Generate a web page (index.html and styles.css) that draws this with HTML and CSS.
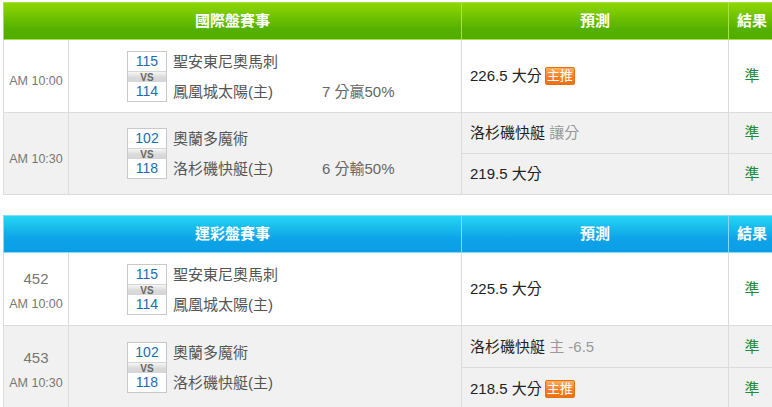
FILE: index.html
```html
<!DOCTYPE html>
<html lang="zh-Hant">
<head>
<meta charset="utf-8">
<link rel="stylesheet" href="styles.css">
</head>
<body>
<div class="page">
  <table class="board board-green">
    <colgroup><col class="c-time"><col class="c-match"><col class="c-pred"><col class="c-res"></colgroup>
    <thead>
      <tr><th colspan="2">國際盤賽事</th><th>預測</th><th>結果</th></tr>
    </thead>
    <tbody>
      <tr class="row-single">
        <td class="time time-only"><div class="clock">AM 10:00</div></td>
        <td class="match">
          <div class="match-inner">
            <div class="score-box"><div class="num">115</div><div class="vs">VS</div><div class="num">114</div></div>
            <div class="teams"><div class="team">聖安東尼奧馬刺</div><div class="team">鳳凰城太陽(主)</div></div>
            <div class="spread">7 分贏50%</div>
          </div>
        </td>
        <td class="pred">226.5 大分<span class="badge">主推</span></td>
        <td class="res">準</td>
      </tr>
      <tr class="row-alt row-sub">
        <td class="time time-only" rowspan="2"><div class="clock">AM 10:30</div></td>
        <td class="match" rowspan="2">
          <div class="match-inner">
            <div class="score-box"><div class="num">102</div><div class="vs">VS</div><div class="num">118</div></div>
            <div class="teams"><div class="team">奧蘭多魔術</div><div class="team">洛杉磯快艇(主)</div></div>
            <div class="spread">6 分輸50%</div>
          </div>
        </td>
        <td class="pred">洛杉磯快艇 <span class="muted">讓分</span></td>
        <td class="res">準</td>
      </tr>
      <tr class="row-alt row-sub">
        <td class="pred">219.5 大分</td>
        <td class="res">準</td>
      </tr>
    </tbody>
  </table>

  <table class="board board-blue">
    <colgroup><col class="c-time"><col class="c-match"><col class="c-pred"><col class="c-res"></colgroup>
    <thead>
      <tr><th colspan="2">運彩盤賽事</th><th>預測</th><th>結果</th></tr>
    </thead>
    <tbody>
      <tr class="row-single">
        <td class="time time-num"><div class="game-no">452</div><div class="clock">AM 10:00</div></td>
        <td class="match">
          <div class="match-inner">
            <div class="score-box"><div class="num">115</div><div class="vs">VS</div><div class="num">114</div></div>
            <div class="teams"><div class="team">聖安東尼奧馬刺</div><div class="team">鳳凰城太陽(主)</div></div>
          </div>
        </td>
        <td class="pred">225.5 大分</td>
        <td class="res">準</td>
      </tr>
      <tr class="row-alt row-sub2">
        <td class="time time-num" rowspan="2"><div class="game-no">453</div><div class="clock">AM 10:30</div></td>
        <td class="match" rowspan="2">
          <div class="match-inner">
            <div class="score-box"><div class="num">102</div><div class="vs">VS</div><div class="num">118</div></div>
            <div class="teams"><div class="team">奧蘭多魔術</div><div class="team">洛杉磯快艇(主)</div></div>
          </div>
        </td>
        <td class="pred">洛杉磯快艇 <span class="muted">主 -6.5</span></td>
        <td class="res">準</td>
      </tr>
      <tr class="row-alt row-sub2">
        <td class="pred">218.5 大分<span class="badge">主推</span></td>
        <td class="res">準</td>
      </tr>
    </tbody>
  </table>
</div>
</body>
</html>
```

FILE: styles.css
```css
html, body {
  margin: 0;
  padding: 0;
  background: #ffffff;
}

body {
  font-family: "Liberation Sans", "Noto Sans CJK TC", sans-serif;
  color: #333;
}

.page {
  padding: 2px 0 0 3px;
  display: flex;
  flex-direction: column;
  gap: 20px;
}

.board {
  border-collapse: collapse;
  table-layout: fixed;
  width: 772px;
}

.c-time { width: 65px; }
.c-match { width: 393px; }
.c-pred { width: 267px; }
.c-res { width: 47px; }

.board th {
  height: 36px;
  padding: 0;
  color: #fff;
  font-size: 15px;
  font-weight: bold;
  text-align: center;
  line-height: 36px;
}

.board-green thead tr {
  background: linear-gradient(#8fd600, #55b100 70%, #4fad00);
}
.board-green th {
  border: 1px solid #a8e24a;
}

.board-blue thead tr {
  background: linear-gradient(#25d6f2, #0ea4e8 60%, #0a9de6);
}
.board-blue th {
  border: 1px solid #8ad9f2;
}

.board td {
  border: 1px solid #dcdcdc;
  padding: 0;
  font-size: 15px;
  line-height: 20px;
}

.row-single td { height: 72px; }
.row-sub td { height: 40px; }
.row-sub2 td { height: 41px; }

.row-alt td { background: #f1f1f1; }

.time {
  text-align: center;
  color: #777;
}

.clock {
  font-size: 12.5px;
  line-height: 16px;
}
.time-only .clock { margin-top: 10px; }

.game-no {
  font-size: 15px;
  line-height: 18px;
  margin-bottom: 8px;
}
.time-num .game-no { margin-top: 4px; }

.match-inner {
  display: flex;
  align-items: flex-start;
  padding-left: 58px;
}

.score-box {
  width: 38px;
  border: 1px solid #c9c9c9;
  background: #fff;
  display: flex;
  flex-direction: column;
}
.num {
  height: 19px;
  line-height: 19px;
  font-size: 14px;
  color: #1d6cab;
  text-align: center;
}
.vs {
  height: 11px;
  line-height: 11px;
  font-size: 10px;
  font-weight: bold;
  color: #666;
  text-align: center;
  background: linear-gradient(#f6f6f6, #dadada 60%, #d6d6d6);
  border-top: 1px solid #d6d6d6;
  border-bottom: 1px solid #d6d6d6;
  box-sizing: border-box;
}

.teams {
  margin-left: 6px;
  width: 149px;
  height: 51px;
  display: flex;
  flex-direction: column;
  justify-content: space-between;
  color: #555;
}
.team {
  line-height: 21px;
  white-space: nowrap;
}

.spread {
  align-self: flex-end;
  line-height: 21px;
  color: #666;
  white-space: nowrap;
}

.board td.pred {
  padding-left: 8px;
  color: #222;
  white-space: nowrap;
}
.muted { color: #999; }

.badge {
  display: inline-block;
  vertical-align: top;
  margin-left: 3px;
  height: 16px;
  line-height: 16px;
  padding: 0 1px;
  font-size: 13px;
  color: #fff;
  background: linear-gradient(#fdb061, #f57f22 55%, #ef7114);
  border: 1px solid #e2730f;
  border-radius: 2px;
  position: relative;
  top: 1px;
}

.res {
  text-align: center;
  color: #1e8a3b;
}
```
